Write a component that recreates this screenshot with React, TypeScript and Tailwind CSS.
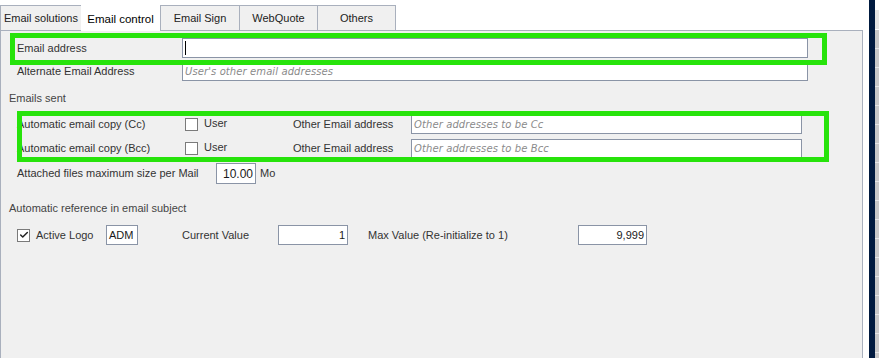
import { Check } from "lucide-react";

const tabs = ["Email solutions", "Email control", "Email Sign", "WebQuote", "Others"];
const tabWidths = ["w-[81px]", "w-[79px]", "w-[79px]", "w-[78px]", "w-[79px]"];

function Box({ className, value, placeholder, right }: { className: string; value?: string; placeholder?: string; right?: boolean }) {
  return (
    <div
      className={`${className} shrink-0 bg-white border border-[#8a94a6] flex items-center px-[2px] text-[11px] text-[#1a1a1a] ${right ? "justify-end" : ""}`}
    >
      {value ? (
        <span>{value}</span>
      ) : placeholder ? (
        <span className="italic text-[#8a8a8a] tracking-[0.1px]" style={{ fontFamily: '"DejaVu Sans", sans-serif', fontSize: "10px" }}>
          {placeholder}
        </span>
      ) : null}
    </div>
  );
}

function CheckBox({ checked }: { checked?: boolean }) {
  return (
    <div className="w-[13px] h-[13px] shrink-0 bg-white border border-[#7a7a7a] flex items-center justify-center">
      {checked && <Check className="w-[10px] h-[10px] text-[#222]" strokeWidth={3.5} />}
    </div>
  );
}

export default function App() {
  return (
    <div className="w-[879px] h-[358px] bg-white flex overflow-hidden" style={{ fontFamily: '"Liberation Sans", Arial, sans-serif' }}>
      <div className="w-[863px] shrink-0 flex flex-col">
        {/* tab strip */}
        <div className="h-[31px] flex items-end shrink-0">
          {tabs.map((t, i) =>
            i === 1 ? (
              <div key={t} className={`${tabWidths[i]} h-[31px] bg-white flex items-center justify-center pt-[8px] text-[11.5px] text-black`}>
                {t}
              </div>
            ) : (
              <div
                key={t}
                className={`${tabWidths[i]} h-[26px] bg-[#f0f0f0] border-t border-b border-l border-[#a9b0bd] ${i === 4 ? "border-r" : ""} flex items-center justify-center text-[11px] text-[#222]`}
              >
                {t}
              </div>
            )
          )}
          <div className="flex-1 border-b border-[#a9b0bd]" />
        </div>

        {/* panel */}
        <div className="relative flex-1 bg-[#f0f0f0] border-l border-r border-[#a9b0bd] text-[11px] text-[#333]">
          <div className="pl-[16px] pt-[7px]">
            <div className="h-[20px] flex items-center">
              <span className="w-[165px] shrink-0">Email address</span>
              <div className="w-[626px] h-[20px] bg-white border border-[#8a94a6] flex items-center pl-[2px]">
                <div className="w-[1px] h-[14px] bg-black" />
              </div>
            </div>
            <div className="mt-[4px] h-[19px] flex items-center">
              <span className="w-[165px] shrink-0">Alternate Email Address</span>
              <Box className="w-[626px] h-[19px]" placeholder="User's other email addresses" />
            </div>
          </div>

          <div className="pl-[8px] mt-[10px] h-[14px] flex items-center text-[#444]">Emails sent</div>

          <div className="pl-[16px]">
            <div className="mt-[10px] h-[19px] flex items-center">
              <span className="w-[168px] shrink-0">Automatic email copy (Cc)</span>
              <CheckBox />
              <span className="w-[95px] pl-[6px] shrink-0 -mt-[3px]">User</span>
              <span className="w-[118px] shrink-0">Other Email address</span>
              <Box className="w-[391px] h-[19px]" placeholder="Other addresses to be Cc" />
            </div>
            <div className="mt-[5px] h-[19px] flex items-center">
              <span className="w-[168px] shrink-0">Automatic email copy (Bcc)</span>
              <CheckBox />
              <span className="w-[95px] pl-[6px] shrink-0 -mt-[3px]">User</span>
              <span className="w-[118px] shrink-0">Other Email address</span>
              <Box className="w-[391px] h-[19px]" placeholder="Other addresses to be Bcc" />
            </div>
            <div className="mt-[5px] h-[21px] flex items-center">
              <span className="w-[199px] shrink-0">Attached files maximum size per Mail</span>
              <Box className="w-[40px] h-[21px] text-[12px]" value="10.00" right />
              <span className="pl-[4px]">Mo</span>
            </div>
          </div>

          <div className="pl-[8px] mt-[17px] h-[14px] flex items-center text-[#444]">Automatic reference in email subject</div>

          <div className="pl-[16px] mt-[10px] h-[20px] flex items-center">
            <CheckBox checked />
            <span className="w-[76px] pl-[6px] shrink-0">Active Logo</span>
            <Box className="w-[32px] h-[20px]" value="ADM" />
            <span className="w-[96px] pl-[44px] shrink-0 box-content">Current Value</span>
            <Box className="w-[70px] h-[20px]" value="1" right />
            <span className="w-[230px] pl-[20px] shrink-0">Max Value (Re-initialize to 1)</span>
            <Box className="w-[69px] h-[20px]" value="9,999" right />
          </div>

          {/* highlight overlays */}
          <div className="absolute left-[9px] top-[2px] w-[817px] h-[32px] border-[5px] border-[#27e30b] pointer-events-none" />
          <div className="absolute left-[16px] top-[80px] w-[812px] h-[51px] border-[5px] border-[#27e30b] pointer-events-none" />
        </div>
      </div>

      {/* right edge */}
      <div className="w-[6px] shrink-0 bg-white" />
      <div className="w-[6px] shrink-0 bg-[#001a3f]" />
      <div className="flex-1 flex flex-col bg-[#c8c8c8]">
        <div className="h-[10px] bg-white" />
        <div className="h-[20px] bg-[#e4e4e4] border-b border-white" />
        {Array.from({ length: 17 }).map((_, i) => (
          <div key={i} className="h-[19px] shrink-0 border-b border-[#e6e6e6]" />
        ))}
      </div>
    </div>
  );
}
